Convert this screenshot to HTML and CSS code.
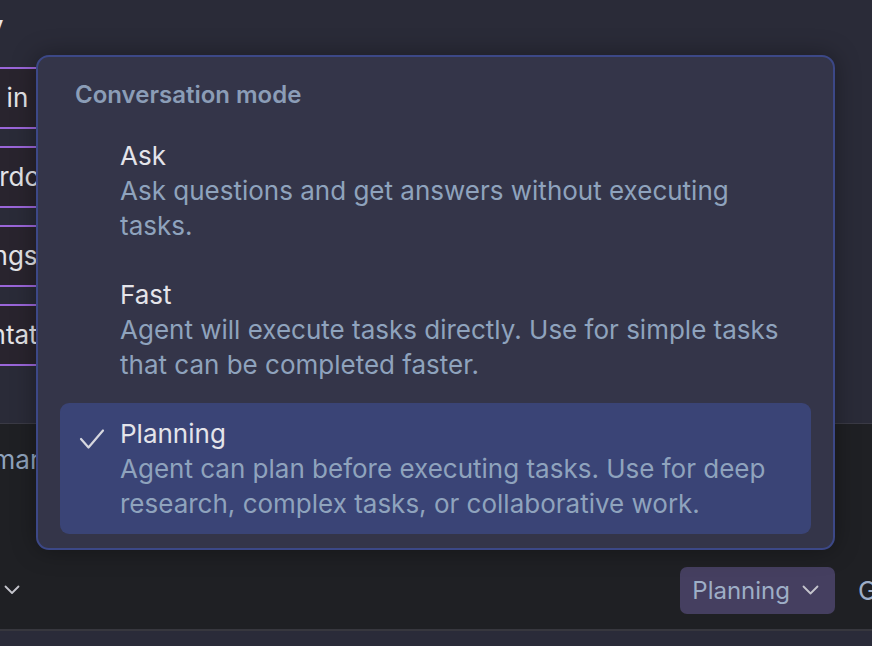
FILE: index.html
```html
<!DOCTYPE html>
<html>
<head>
<meta charset="utf-8">
<link rel="stylesheet" href="styles.css">
</head>
<body>
<div class="app">
  <section class="top">
    <div class="title">Summary</div>
    <ul class="list">
      <li class="item item-a">Sign in</li>
      <li class="item item-b">Keyboardcontrols</li>
      <li class="item item-c">Settings</li>
      <li class="item item-d">Documentation</li>
    </ul>
  </section>
  <section class="bottom">
    <div class="prompt">Ask for a summary</div>
    <div class="toolbar">
      <span class="tool-chevron">
        <svg width="16" height="10" viewBox="0 0 16 10"><path d="M1.5 1.5 L8 8 L14.5 1.5" fill="none" stroke="#c4c4cc" stroke-width="1.8" stroke-linecap="round" stroke-linejoin="round"/></svg>
      </span>
      <span class="spacer"></span>
      <button class="mode-btn">Planning
        <svg width="17" height="10" viewBox="0 0 17 10"><path d="M1.5 1.5 L8.5 8.5 L15.5 1.5" fill="none" stroke="#c4c4cc" stroke-width="1.8" stroke-linecap="round" stroke-linejoin="round"/></svg>
      </button>
      <span class="model">Gemini</span>
    </div>
  </section>
  <footer class="strip"></footer>

  <div class="menu">
    <div class="menu-head">Conversation mode</div>
    <div class="opt">
      <div class="opt-title">Ask</div>
      <div class="opt-desc">Ask questions and get answers without executing tasks.</div>
    </div>
    <div class="opt">
      <div class="opt-title">Fast</div>
      <div class="opt-desc">Agent will execute tasks directly. Use for simple tasks that can be completed faster.</div>
    </div>
    <div class="opt selected">
      <svg class="check" width="26" height="22" viewBox="0 0 26 22"><path d="M2 11 L9.5 19.5 L24 2.5" fill="none" stroke="#d6d7df" stroke-width="2.2" stroke-linecap="round" stroke-linejoin="round"/></svg>
      <div class="opt-title">Planning</div>
      <div class="opt-desc">Agent can plan before executing tasks. Use for deep research, complex tasks, or collaborative work.</div>
    </div>
  </div>
</div>
</body>
</html>
```

FILE: styles.css
```css
* { box-sizing: border-box; }
html, body { margin: 0; padding: 0; }
body {
  width: 872px;
  height: 646px;
  overflow: hidden;
  background: #1f2024;
  font-family: Inter, "Noto Sans", sans-serif;
}
.app {
  position: relative;
  width: 872px;
  height: 646px;
  display: flex;
  flex-direction: column;
}
.top {
  height: 424px;
  background: #2a2b38;
  border-bottom: 1px solid #3a3a45;
  overflow: hidden;
  padding-top: 8px;
}
.title {
  font-size: 30px;
  font-weight: 700;
  color: #e6e6ea;
  line-height: 36px;
  margin-left: -138px;
  white-space: nowrap;
}
.list {
  list-style: none;
  margin: 23px 0 0 0;
  padding: 0;
  display: flex;
  flex-direction: column;
  gap: 17px;
}
.item {
  width: 260px;
  height: 62px;
  border-top: 2px solid #9a66d9;
  border-bottom: 2px solid #9a66d9;
  background: #29242e;
  color: #e4e4e8;
  font-size: 26px;
  line-height: 58px;
  white-space: nowrap;
}
.item-a { margin-left: -55px; }
.item-b { margin-left: -93px; }
.item-c { margin-left: -62px; }
.item-d { margin-left: -112px; }

.bottom {
  flex: 1;
  background: #1f2024;
  display: flex;
  flex-direction: column;
  overflow: hidden;
}
.prompt {
  margin-top: 18px;
  margin-left: -176px;
  font-size: 26px;
  line-height: 35px;
  color: #8fa3bd;
  white-space: nowrap;
}
.toolbar {
  margin-top: 89px;
  display: flex;
  align-items: center;
  height: 48px;
}
.tool-chevron {
  margin-left: 4px;
  display: flex;
}
.spacer { flex: 1; }
.mode-btn {
  display: flex;
  align-items: center;
  gap: 12px;
  height: 47px;
  padding: 0 16px 0 12px;
  border: none;
  border-radius: 7px;
  background: #453f60;
  color: #9eaec6;
  font-family: Inter, "Noto Sans", sans-serif;
  font-size: 24px;
  margin-right: 23px;
}
.model {
  font-size: 26px;
  color: #9eaec6;
  width: 14px;
  overflow: hidden;
  white-space: nowrap;
}
.strip {
  height: 17px;
  background: #2a2b39;
  border-top: 2px solid #37373e;
}

.menu {
  position: absolute;
  left: 36px;
  top: 55px;
  width: 799px;
  background: #343549;
  border: 2px solid #3c4887;
  border-radius: 13px;
  box-shadow: 0 0 24px rgba(0, 0, 0, 0.35);
  padding: 20px 22px 14px 22px;
  display: flex;
  flex-direction: column;
  gap: 8px;
}
.menu-head {
  font-size: 24px;
  font-weight: 600;
  line-height: 35px;
  color: #8b9db7;
  margin-left: 15px;
  margin-bottom: 5px;
}
.opt {
  position: relative;
  padding: 13px 24px 13px 60px;
  border-radius: 9px;
}
.opt.selected { background: #3a4476; }
.opt-title {
  font-size: 26px;
  line-height: 35px;
  color: #e4e4ea;
}
.opt-desc {
  font-size: 26px;
  line-height: 35px;
  color: #8fa3bd;
}
.check {
  position: absolute;
  left: 19px;
  top: 25px;
}
```
